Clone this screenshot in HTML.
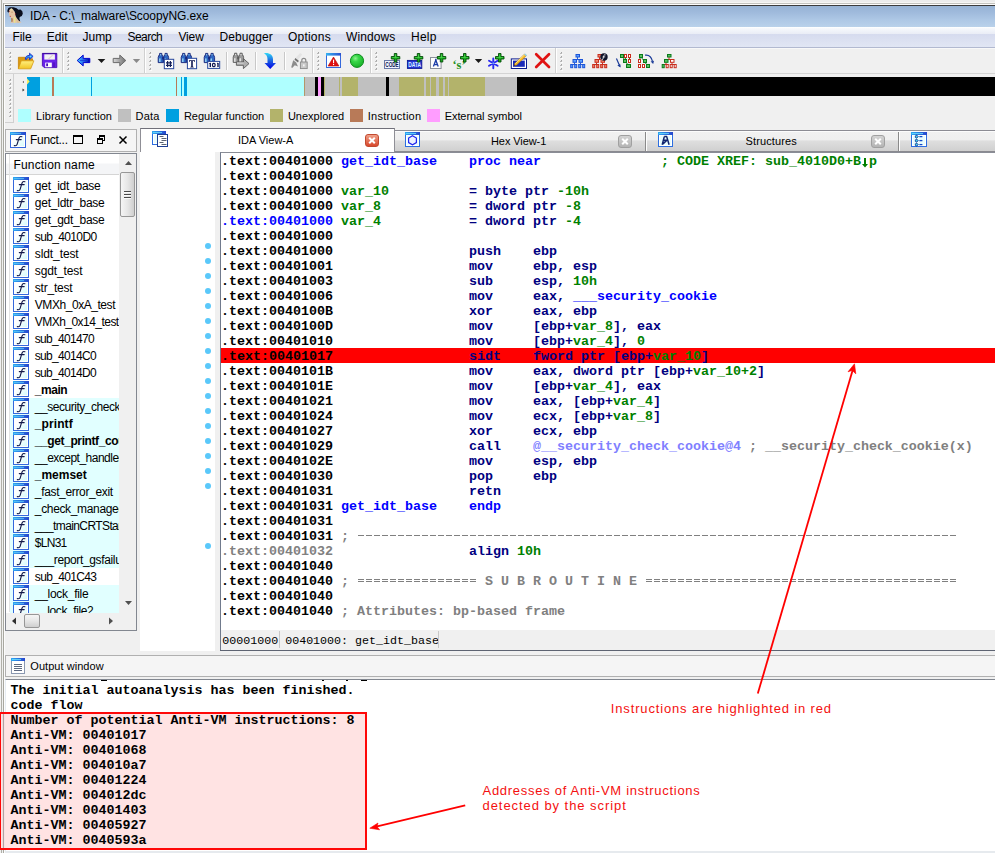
<!DOCTYPE html>
<html><head><meta charset="utf-8"><title>IDA</title><style>
*{box-sizing:border-box;margin:0;padding:0}
html,body{width:995px;height:853px;overflow:hidden;background:#f0f0f0}
body{font-family:"Liberation Sans",sans-serif;font-size:12px;color:#000;position:relative}
.a{position:absolute}
.t{position:absolute;white-space:pre;line-height:1}
.mono{font-family:"Liberation Mono",monospace;font-weight:bold;font-size:13.333px;white-space:pre;line-height:15px}
.ln{position:absolute;left:221px;height:15px;white-space:pre}
.k{color:#000}.b{color:#0000ff}.n{color:#000080}.g{color:#008000}.y{color:#808080}.p{color:#8080ff}
</style></head><body>
<div class="a" style="left:0px;top:0px;width:995px;height:5px;background:#ececec;"></div>
<div class="a" style="left:0px;top:0px;width:5px;height:853px;background:#f0f0f0;"></div>
<div class="a" style="left:1px;top:0px;width:1px;height:853px;background:#b0b0a8;"></div>
<div class="a" style="left:3px;top:2px;width:992px;height:1px;background:#f6f6f4;"></div>
<div class="a" style="left:3px;top:3px;width:992px;height:1px;background:#c4c4c0;"></div>
<div class="a" style="left:3px;top:3px;width:1px;height:850px;background:#a8a8a0;"></div>
<div class="a" style="left:4px;top:4px;width:991px;height:1px;background:#fcfcfc;"></div>
<div class="a" style="left:4px;top:4px;width:1px;height:849px;background:#fcfcfc;"></div>
<div class="a" style="left:5px;top:5px;width:990px;height:1px;background:#3c3c3c;"></div>
<div class="a" style="left:5px;top:6px;width:990px;height:21px;background:linear-gradient(to bottom,#97b3d5 0%,#9fbadc 30%,#adc7e5 65%,#b9d1ea 100%);"></div>
<div class="t" style="left:29.9px;top:9.84px;font-size:12px;letter-spacing:-0.093px;">IDA - C:\_malware\ScoopyNG.exe</div>
<svg class="a" style="left:7px;top:7px" width="16" height="16" viewBox="0 0 16 16"><path d="M1.87 3.16L4.2 1.1L5.7 2.1L7.8 4.7L8.3 7.8L9.1 10.1L10.1 11.4L11.9 13.7L13.2 14.5L14.5 15.8L2.9 15.8L4.7 14.8L4.96 11.4L3.16 10.1L2.1 8.3L1.87 5.7Z" fill="#e6c4a4"/><path d="M4.2 10.9L5.7 11.4L5.5 14.8L4.45 14.9Z" fill="#a8703c"/><path d="M7 10.1h1.3v5.7h-1.3z" fill="#e6e690"/><path d="M3.16 3.3L4.45 1.35L5.7 3.3Z" fill="#e8e8a0"/><path d="M8.4 10.4L12.4 15.8L10.4 15.8Z" fill="#d8c090"/><path d="M0.45 3.16L1.35 1.1L3.16 0.19L6.5 0.19L9.6 1.35L11.4 2.64L13.5 2.4L15.3 4.2L15.8 6.8L14.8 9.1L12.7 10.1L12.4 11.4L13.2 14.5L11.9 13.7L10.1 11.4L9.1 10.1L8.3 7.8L7.8 4.7L5.7 2.1L4.2 1.1L2.4 2.64L1.6 5.7L0.45 4.7Z" fill="#0a0e1e"/><circle cx="3.3" cy="9.3" r="0.55" fill="#b02040"/><circle cx="8.5" cy="6.9" r="0.6" fill="#902030"/><circle cx="2.3" cy="4.4" r="0.5" fill="#903040"/><path d="M4.6 4.8h0.9v0.7h-0.9z" fill="#906030"/></svg>
<div class="a" style="left:5px;top:27px;width:990px;height:20px;background:linear-gradient(to bottom,#ffffff 0%,#f6f8fc 8%,#eaedf6 34%,#d6dbee 35%,#e1e6f4 100%);"></div>
<div class="a" style="left:5px;top:47px;width:990px;height:1px;background:#b2b9d0;"></div>
<div class="a" style="left:5px;top:48px;width:990px;height:1px;background:#f8f8f8;"></div>
<div class="t" style="left:12.4px;top:30.84px;font-size:12px;letter-spacing:-0.015px;">File</div>
<div class="t" style="left:46.7px;top:30.84px;font-size:12px;letter-spacing:0.071px;">Edit</div>
<div class="t" style="left:82.5px;top:30.84px;font-size:12px;letter-spacing:-0.015px;">Jump</div>
<div class="t" style="left:127.5px;top:30.84px;font-size:12px;letter-spacing:-0.546px;">Search</div>
<div class="t" style="left:178.5px;top:30.84px;font-size:12px;letter-spacing:-0.166px;">View</div>
<div class="t" style="left:219.5px;top:30.84px;font-size:12px;letter-spacing:0.083px;">Debugger</div>
<div class="t" style="left:287.9px;top:30.84px;font-size:12px;letter-spacing:0.240px;">Options</div>
<div class="t" style="left:346.0px;top:30.84px;font-size:12px;letter-spacing:0.102px;">Windows</div>
<div class="t" style="left:411.1px;top:30.84px;font-size:12px;letter-spacing:0.204px;">Help</div>
<div class="a" style="left:5px;top:49px;width:990px;height:24px;background:#f0f0f0;"></div>
<div class="a" style="left:5px;top:73px;width:990px;height:1px;background:#d4d4d4;"></div>
<div class="a" style="left:10px;top:52px;width:1px;height:1px;background:#a4a4a4"></div><div class="a" style="left:9px;top:53px;width:2px;height:1px;background:#b8b8b8"></div><div class="a" style="left:10px;top:54px;width:2px;height:1px;background:#fbfbfb"></div>
<div class="a" style="left:10px;top:56px;width:1px;height:1px;background:#a4a4a4"></div><div class="a" style="left:9px;top:57px;width:2px;height:1px;background:#b8b8b8"></div><div class="a" style="left:10px;top:58px;width:2px;height:1px;background:#fbfbfb"></div>
<div class="a" style="left:10px;top:60px;width:1px;height:1px;background:#a4a4a4"></div><div class="a" style="left:9px;top:61px;width:2px;height:1px;background:#b8b8b8"></div><div class="a" style="left:10px;top:62px;width:2px;height:1px;background:#fbfbfb"></div>
<div class="a" style="left:10px;top:64px;width:1px;height:1px;background:#a4a4a4"></div><div class="a" style="left:9px;top:65px;width:2px;height:1px;background:#b8b8b8"></div><div class="a" style="left:10px;top:66px;width:2px;height:1px;background:#fbfbfb"></div>
<div class="a" style="left:10px;top:68px;width:1px;height:1px;background:#a4a4a4"></div><div class="a" style="left:9px;top:69px;width:2px;height:1px;background:#b8b8b8"></div><div class="a" style="left:10px;top:70px;width:2px;height:1px;background:#fbfbfb"></div>
<div class="a" style="left:68px;top:52px;width:1px;height:1px;background:#a4a4a4"></div><div class="a" style="left:67px;top:53px;width:2px;height:1px;background:#b8b8b8"></div><div class="a" style="left:68px;top:54px;width:2px;height:1px;background:#fbfbfb"></div>
<div class="a" style="left:68px;top:56px;width:1px;height:1px;background:#a4a4a4"></div><div class="a" style="left:67px;top:57px;width:2px;height:1px;background:#b8b8b8"></div><div class="a" style="left:68px;top:58px;width:2px;height:1px;background:#fbfbfb"></div>
<div class="a" style="left:68px;top:60px;width:1px;height:1px;background:#a4a4a4"></div><div class="a" style="left:67px;top:61px;width:2px;height:1px;background:#b8b8b8"></div><div class="a" style="left:68px;top:62px;width:2px;height:1px;background:#fbfbfb"></div>
<div class="a" style="left:68px;top:64px;width:1px;height:1px;background:#a4a4a4"></div><div class="a" style="left:67px;top:65px;width:2px;height:1px;background:#b8b8b8"></div><div class="a" style="left:68px;top:66px;width:2px;height:1px;background:#fbfbfb"></div>
<div class="a" style="left:68px;top:68px;width:1px;height:1px;background:#a4a4a4"></div><div class="a" style="left:67px;top:69px;width:2px;height:1px;background:#b8b8b8"></div><div class="a" style="left:68px;top:70px;width:2px;height:1px;background:#fbfbfb"></div>
<div class="a" style="left:150px;top:52px;width:1px;height:1px;background:#a4a4a4"></div><div class="a" style="left:149px;top:53px;width:2px;height:1px;background:#b8b8b8"></div><div class="a" style="left:150px;top:54px;width:2px;height:1px;background:#fbfbfb"></div>
<div class="a" style="left:150px;top:56px;width:1px;height:1px;background:#a4a4a4"></div><div class="a" style="left:149px;top:57px;width:2px;height:1px;background:#b8b8b8"></div><div class="a" style="left:150px;top:58px;width:2px;height:1px;background:#fbfbfb"></div>
<div class="a" style="left:150px;top:60px;width:1px;height:1px;background:#a4a4a4"></div><div class="a" style="left:149px;top:61px;width:2px;height:1px;background:#b8b8b8"></div><div class="a" style="left:150px;top:62px;width:2px;height:1px;background:#fbfbfb"></div>
<div class="a" style="left:150px;top:64px;width:1px;height:1px;background:#a4a4a4"></div><div class="a" style="left:149px;top:65px;width:2px;height:1px;background:#b8b8b8"></div><div class="a" style="left:150px;top:66px;width:2px;height:1px;background:#fbfbfb"></div>
<div class="a" style="left:150px;top:68px;width:1px;height:1px;background:#a4a4a4"></div><div class="a" style="left:149px;top:69px;width:2px;height:1px;background:#b8b8b8"></div><div class="a" style="left:150px;top:70px;width:2px;height:1px;background:#fbfbfb"></div>
<div class="a" style="left:318px;top:52px;width:1px;height:1px;background:#a4a4a4"></div><div class="a" style="left:317px;top:53px;width:2px;height:1px;background:#b8b8b8"></div><div class="a" style="left:318px;top:54px;width:2px;height:1px;background:#fbfbfb"></div>
<div class="a" style="left:318px;top:56px;width:1px;height:1px;background:#a4a4a4"></div><div class="a" style="left:317px;top:57px;width:2px;height:1px;background:#b8b8b8"></div><div class="a" style="left:318px;top:58px;width:2px;height:1px;background:#fbfbfb"></div>
<div class="a" style="left:318px;top:60px;width:1px;height:1px;background:#a4a4a4"></div><div class="a" style="left:317px;top:61px;width:2px;height:1px;background:#b8b8b8"></div><div class="a" style="left:318px;top:62px;width:2px;height:1px;background:#fbfbfb"></div>
<div class="a" style="left:318px;top:64px;width:1px;height:1px;background:#a4a4a4"></div><div class="a" style="left:317px;top:65px;width:2px;height:1px;background:#b8b8b8"></div><div class="a" style="left:318px;top:66px;width:2px;height:1px;background:#fbfbfb"></div>
<div class="a" style="left:318px;top:68px;width:1px;height:1px;background:#a4a4a4"></div><div class="a" style="left:317px;top:69px;width:2px;height:1px;background:#b8b8b8"></div><div class="a" style="left:318px;top:70px;width:2px;height:1px;background:#fbfbfb"></div>
<div class="a" style="left:376px;top:52px;width:1px;height:1px;background:#a4a4a4"></div><div class="a" style="left:375px;top:53px;width:2px;height:1px;background:#b8b8b8"></div><div class="a" style="left:376px;top:54px;width:2px;height:1px;background:#fbfbfb"></div>
<div class="a" style="left:376px;top:56px;width:1px;height:1px;background:#a4a4a4"></div><div class="a" style="left:375px;top:57px;width:2px;height:1px;background:#b8b8b8"></div><div class="a" style="left:376px;top:58px;width:2px;height:1px;background:#fbfbfb"></div>
<div class="a" style="left:376px;top:60px;width:1px;height:1px;background:#a4a4a4"></div><div class="a" style="left:375px;top:61px;width:2px;height:1px;background:#b8b8b8"></div><div class="a" style="left:376px;top:62px;width:2px;height:1px;background:#fbfbfb"></div>
<div class="a" style="left:376px;top:64px;width:1px;height:1px;background:#a4a4a4"></div><div class="a" style="left:375px;top:65px;width:2px;height:1px;background:#b8b8b8"></div><div class="a" style="left:376px;top:66px;width:2px;height:1px;background:#fbfbfb"></div>
<div class="a" style="left:376px;top:68px;width:1px;height:1px;background:#a4a4a4"></div><div class="a" style="left:375px;top:69px;width:2px;height:1px;background:#b8b8b8"></div><div class="a" style="left:376px;top:70px;width:2px;height:1px;background:#fbfbfb"></div>
<div class="a" style="left:561px;top:52px;width:1px;height:1px;background:#a4a4a4"></div><div class="a" style="left:560px;top:53px;width:2px;height:1px;background:#b8b8b8"></div><div class="a" style="left:561px;top:54px;width:2px;height:1px;background:#fbfbfb"></div>
<div class="a" style="left:561px;top:56px;width:1px;height:1px;background:#a4a4a4"></div><div class="a" style="left:560px;top:57px;width:2px;height:1px;background:#b8b8b8"></div><div class="a" style="left:561px;top:58px;width:2px;height:1px;background:#fbfbfb"></div>
<div class="a" style="left:561px;top:60px;width:1px;height:1px;background:#a4a4a4"></div><div class="a" style="left:560px;top:61px;width:2px;height:1px;background:#b8b8b8"></div><div class="a" style="left:561px;top:62px;width:2px;height:1px;background:#fbfbfb"></div>
<div class="a" style="left:561px;top:64px;width:1px;height:1px;background:#a4a4a4"></div><div class="a" style="left:560px;top:65px;width:2px;height:1px;background:#b8b8b8"></div><div class="a" style="left:561px;top:66px;width:2px;height:1px;background:#fbfbfb"></div>
<div class="a" style="left:561px;top:68px;width:1px;height:1px;background:#a4a4a4"></div><div class="a" style="left:560px;top:69px;width:2px;height:1px;background:#b8b8b8"></div><div class="a" style="left:561px;top:70px;width:2px;height:1px;background:#fbfbfb"></div>
<div class="a" style="left:62px;top:48px;width:1px;height:25px;background:#d0d0d0;"></div>
<div class="a" style="left:63px;top:48px;width:1px;height:25px;background:#fff;"></div>
<div class="a" style="left:144px;top:48px;width:1px;height:25px;background:#d0d0d0;"></div>
<div class="a" style="left:145px;top:48px;width:1px;height:25px;background:#fff;"></div>
<div class="a" style="left:312px;top:48px;width:1px;height:25px;background:#d0d0d0;"></div>
<div class="a" style="left:313px;top:48px;width:1px;height:25px;background:#fff;"></div>
<div class="a" style="left:370px;top:48px;width:1px;height:25px;background:#d0d0d0;"></div>
<div class="a" style="left:371px;top:48px;width:1px;height:25px;background:#fff;"></div>
<div class="a" style="left:555px;top:48px;width:1px;height:25px;background:#d0d0d0;"></div>
<div class="a" style="left:556px;top:48px;width:1px;height:25px;background:#fff;"></div>
<div class="a" style="left:226px;top:52px;width:1px;height:18px;background:#c8c8c8;"></div>
<div class="a" style="left:227px;top:52px;width:1px;height:18px;background:#fff;"></div>
<div class="a" style="left:255px;top:52px;width:1px;height:18px;background:#c8c8c8;"></div>
<div class="a" style="left:256px;top:52px;width:1px;height:18px;background:#fff;"></div>
<div class="a" style="left:284px;top:52px;width:1px;height:18px;background:#c8c8c8;"></div>
<div class="a" style="left:285px;top:52px;width:1px;height:18px;background:#fff;"></div>
<svg class="a" style="left:0;top:48px" width="995" height="26" viewBox="0 48 995 26"><defs><linearGradient id="gfold" x1="0" y1="0" x2="0" y2="1"><stop offset="0" stop-color="#fff080"/><stop offset="1" stop-color="#f2c424"/></linearGradient><linearGradient id="gback" x1="0" y1="0" x2="1" y2="0"><stop offset="0" stop-color="#40d0ff"/><stop offset="0.45" stop-color="#2a70f0"/><stop offset="1" stop-color="#0000a0"/></linearGradient><linearGradient id="gfwd" x1="0" y1="0" x2="1" y2="0"><stop offset="0" stop-color="#d8d8d8"/><stop offset="1" stop-color="#707070"/></linearGradient><linearGradient id="gdown" x1="0" y1="0" x2="0" y2="1"><stop offset="0" stop-color="#30d8f8"/><stop offset="0.5" stop-color="#1c60e0"/><stop offset="1" stop-color="#0000e8"/></linearGradient><radialGradient id="gball" cx="0.38" cy="0.32" r="0.7"><stop offset="0" stop-color="#90f090"/><stop offset="0.35" stop-color="#38d848"/><stop offset="1" stop-color="#18b028"/></radialGradient><linearGradient id="gwin" x1="0" y1="0" x2="1" y2="0"><stop offset="0" stop-color="#35b4f2"/><stop offset="1" stop-color="#2a4fd0"/></linearGradient></defs><path d="M18.4 57.3h6.8l1 1.5h6.3v2.2h-11l-3.1 7.6z" fill="#dc9a10" stroke="#c88408" stroke-width="0.8" stroke-linejoin="round"/><path d="M21.3 60.8h12.6l-3.2 8h-12.3z" fill="url(#gfold)" stroke="#d89a10" stroke-width="0.8" stroke-linejoin="round"/><path d="M25.3 59.3c0-3 1.8-3.9 4.2-3.9v-2.2l3.6 3.2-3.6 3.2v-2.1c-1.6 0-2.6 0.4-2.9 1.8z" fill="#3090f0" stroke="#1428c8" stroke-width="0.9" stroke-linejoin="round"/><path d="M29.8 55.9l1.9 0.6-1.9 0.8z" fill="#7ff0ff"/><path d="M42.4 53.4h14.4v14.2h-12.6l-1.8-1.8z" fill="#6a22ea" stroke="#4a0cb4" stroke-width="0.9" stroke-linejoin="round"/><rect x="42.4" y="53.2" width="14.4" height="1" fill="#3a0a98"/><rect x="44.3" y="54.3" width="10.6" height="5.3" fill="#f2f2f2"/><path d="M47.5 59.2l5-4.6h1.6l-5 4.6z" fill="#e0d0d0"/><rect x="45.2" y="62.6" width="6.6" height="4.6" fill="#fdfdff"/><rect x="46.2" y="63.4" width="1.8" height="2.8" fill="#4a10b8"/><rect x="52.6" y="62.4" width="2.6" height="4.6" fill="#5514c8"/><path d="M77.2 60.5l6-5.4v3.3h6.6v4.2h-6.6v3.3z" fill="url(#gback)" stroke="#0000d0" stroke-width="1" stroke-linejoin="round"/><path d="M80 60.5h8" stroke="#1030d8" stroke-width="1" opacity="0.7"/><path d="M97.7 58.9h7.6l-3.8 4.1z" fill="#1a1a1a"/><path d="M125.8 60.5l-6-5.4v3.3h-6.6v4.2h6.6v3.3z" fill="url(#gfwd)" stroke="#6a6a6a" stroke-width="1" stroke-linejoin="round"/><path d="M132.8 58.9h7.4l-3.7 4.1z" fill="#8a8a8a"/><path d="M159.6 53.4h2.2v2h0.8l0.6 2v5.2h-5v-5.2l0.6-2h0.8z" fill="#2f68c4" stroke="#16267a" stroke-width="0.9" stroke-linejoin="round"/><rect x="159" y="58.4" width="1.6" height="3.6" fill="#8fcdf0"/><rect x="160" y="54.199999999999996" width="1.2" height="1.2" fill="#8fcdf0"/><path d="M165.0 53.4h2.2v2h0.8l0.6 2v5.2h-5v-5.2l0.6-2h0.8z" fill="#2f68c4" stroke="#16267a" stroke-width="0.9" stroke-linejoin="round"/><rect x="164.4" y="58.4" width="1.6" height="3.6" fill="#8fcdf0"/><rect x="165.4" y="54.199999999999996" width="1.2" height="1.2" fill="#8fcdf0"/><rect x="162.2" y="56.9" width="2" height="2.5" fill="#16267a"/><rect x="164.3" y="59.3" width="9.4" height="9.4" fill="#fff" stroke="#27479c" stroke-width="1"/><path d="M167.6 61v6M170.4 61v6M166 62.9h6M166 65.3h6" stroke="#14205a" stroke-width="1.2" fill="none"/><path d="M182.6 53.4h2.2v2h0.8l0.6 2v5.2h-5v-5.2l0.6-2h0.8z" fill="#2f68c4" stroke="#16267a" stroke-width="0.9" stroke-linejoin="round"/><rect x="182" y="58.4" width="1.6" height="3.6" fill="#8fcdf0"/><rect x="183" y="54.199999999999996" width="1.2" height="1.2" fill="#8fcdf0"/><path d="M188.0 53.4h2.2v2h0.8l0.6 2v5.2h-5v-5.2l0.6-2h0.8z" fill="#2f68c4" stroke="#16267a" stroke-width="0.9" stroke-linejoin="round"/><rect x="187.4" y="58.4" width="1.6" height="3.6" fill="#8fcdf0"/><rect x="188.4" y="54.199999999999996" width="1.2" height="1.2" fill="#8fcdf0"/><rect x="185.2" y="56.9" width="2" height="2.5" fill="#16267a"/><rect x="187.4" y="58.3" width="9.2" height="10.4" fill="#fff" stroke="#27479c" stroke-width="1"/><path d="M189 60.2h6v1.6h-0.7l-0.4-0.7h-1.1v5.4l0.9 0.4v0.6h-3.4v-0.6l0.9-0.4v-5.4h-1.1l-0.4 0.7h-0.7z" fill="#101850"/><path d="M205.6 53.4h2.2v2h0.8l0.6 2v5.2h-5v-5.2l0.6-2h0.8z" fill="#2f68c4" stroke="#16267a" stroke-width="0.9" stroke-linejoin="round"/><rect x="205" y="58.4" width="1.6" height="3.6" fill="#8fcdf0"/><rect x="206" y="54.199999999999996" width="1.2" height="1.2" fill="#8fcdf0"/><path d="M211.0 53.4h2.2v2h0.8l0.6 2v5.2h-5v-5.2l0.6-2h0.8z" fill="#2f68c4" stroke="#16267a" stroke-width="0.9" stroke-linejoin="round"/><rect x="210.4" y="58.4" width="1.6" height="3.6" fill="#8fcdf0"/><rect x="211.4" y="54.199999999999996" width="1.2" height="1.2" fill="#8fcdf0"/><rect x="208.2" y="56.9" width="2" height="2.5" fill="#16267a"/><rect x="207.7" y="61.4" width="12" height="7" fill="#fff" stroke="#27479c" stroke-width="1"/><path d="M210.3 63v4M218 63v4" stroke="#101850" stroke-width="1.4"/><path d="M209.3 63.6l1-0.6M217 63.6l1-0.6" stroke="#101850" stroke-width="0.9"/><rect x="212.5" y="63.4" width="2.6" height="3.2" rx="1" fill="none" stroke="#101850" stroke-width="1.2"/><path d="M234.6 53.2h2.2v2h0.8l0.6 2v5.2h-5v-5.2l0.6-2h0.8z" fill="#9c9c9c" stroke="#5c5c5c" stroke-width="0.9" stroke-linejoin="round"/><rect x="234" y="58.2" width="1.6" height="3.6" fill="#e0e0e0"/><rect x="235" y="54.0" width="1.2" height="1.2" fill="#e0e0e0"/><path d="M240.0 53.2h2.2v2h0.8l0.6 2v5.2h-5v-5.2l0.6-2h0.8z" fill="#9c9c9c" stroke="#5c5c5c" stroke-width="0.9" stroke-linejoin="round"/><rect x="239.4" y="58.2" width="1.6" height="3.6" fill="#e0e0e0"/><rect x="240.4" y="54.0" width="1.2" height="1.2" fill="#e0e0e0"/><rect x="237.2" y="56.7" width="2" height="2.5" fill="#5c5c5c"/><path d="M236.4 62h7v-3.4l5.6 5-5.6 5v-3.3h-7z" fill="#b0b0b0" stroke="#5a5a5a" stroke-width="0.9" stroke-linejoin="round"/><path d="M237 63h6.5" stroke="#e8e8e8" stroke-width="0.9"/><path d="M264 53.2c5-0.8 9 1.4 9 6v3.8h3l-5.8 5.9-5.7-5.9h3v-3.8c0-2.5-1-4.6-3.5-6z" fill="url(#gdown)"/><path d="M300.2 53l2 1.6-6 8-3-2.4z" fill="#e4e4e4"/><path d="M293.2 60.2l3 2.4 1.8 4-3.2-1.4-2.6 2.9-1-0.8z" fill="#8c8c8c"/><path d="M295.2 58l3.6 2.8-0.8 1.8-3.4-2.8z" fill="#707070"/><rect x="300.4" y="62" width="6.8" height="6.6" fill="#c8c8c8" stroke="#8a8a8a" stroke-width="0.9"/><path d="M301.8 62v-1.6a2 2 0 0 1 4 0v1.6" fill="none" stroke="#8a8a8a" stroke-width="1.2"/><rect x="303.2" y="64.4" width="1.3" height="2" fill="#fff"/><rect x="326.5" y="53.5" width="14" height="14" fill="#fff" stroke="#3468dc" stroke-width="1"/><rect x="326" y="53" width="15" height="2.6" fill="url(#gwin)"/><path d="M333.5 57l5.4 9h-10.8z" fill="#e01010" stroke="#b00808" stroke-width="0.6" stroke-linejoin="round"/><rect x="333" y="59.6" width="1.1" height="3.6" fill="#fff"/><rect x="333" y="64" width="1.1" height="1.1" fill="#fff"/><circle cx="357" cy="60.8" r="6.6" fill="url(#gball)" stroke="#0c8c1c" stroke-width="1"/><rect x="384.5" y="60.5" width="15" height="8" fill="#eef3ff" stroke="#6a7aa8" stroke-width="1"/><text x="385.3" y="67.4" font-family="Liberation Sans" font-weight="bold" font-size="6.6" fill="#0a1450" textLength="13.4" lengthAdjust="spacingAndGlyphs">CODE</text><path d="M394.3 53.5h2.5v3h3v2.5h-3v3h-2.5v-3h-3v-2.5h3z" fill="#16a81c" stroke="#064c0a" stroke-width="0.9" stroke-linejoin="round"/><path d="M395 54.400000000000006h1v2.8h-1zM392.2 57.2h6.6v0.9h-6.6z" fill="#58e05a" opacity="0.75"/><rect x="407.4" y="60.4" width="14.4" height="8" fill="#2434d8" stroke="#0a1890" stroke-width="0.9"/><text x="408.2" y="67.2" font-family="Liberation Sans" font-weight="bold" font-size="6.6" fill="#d8f4ff" textLength="13" lengthAdjust="spacingAndGlyphs">DATA</text><path d="M417.3 53.5h2.5v3h3v2.5h-3v3h-2.5v-3h-3v-2.5h3z" fill="#16a81c" stroke="#064c0a" stroke-width="0.9" stroke-linejoin="round"/><path d="M418 54.400000000000006h1v2.8h-1zM415.2 57.2h6.6v0.9h-6.6z" fill="#58e05a" opacity="0.75"/><rect x="430.5" y="57.5" width="10.6" height="11" fill="#fdfdfd" stroke="#8a909c" stroke-width="1"/><path d="M433.4 66.6l2.4-6.4 2.4 6.4M434.2 64.6h3.4" stroke="#1c3ca8" stroke-width="1.3" fill="none"/><circle cx="435.8" cy="59.8" r="0.9" fill="#1c3ca8"/><path d="M440.3 53.5h2.5v3h3v2.5h-3v3h-2.5v-3h-3v-2.5h3z" fill="#16a81c" stroke="#064c0a" stroke-width="0.9" stroke-linejoin="round"/><path d="M441 54.400000000000006h1v2.8h-1zM438.2 57.2h6.6v0.9h-6.6z" fill="#58e05a" opacity="0.75"/><text x="452.4" y="68.6" font-family="Liberation Serif" font-weight="bold" font-size="12.5" fill="#239023">‘s’</text><path d="M463.5 53.5h2.5v3h3v2.5h-3v3h-2.5v-3h-3v-2.5h3z" fill="#16a81c" stroke="#064c0a" stroke-width="0.9" stroke-linejoin="round"/><path d="M464.2 54.400000000000006h1v2.8h-1zM461.4 57.2h6.6v0.9h-6.6z" fill="#58e05a" opacity="0.75"/><path d="M474.8 58.9h7.4l-3.7 4.1z" fill="#1a1a1a"/><g stroke="#2828f0" stroke-width="1.9" stroke-linecap="round"><path d="M493.3 58.4v9.8M489 60.8l8.6 5M489 65.8l8.6-5"/></g><circle cx="493.3" cy="63.3" r="1" fill="#70a0ff"/><path d="M498.5 53.5h2.5v3h3v2.5h-3v3h-2.5v-3h-3v-2.5h3z" fill="#16a81c" stroke="#064c0a" stroke-width="0.9" stroke-linejoin="round"/><path d="M499.2 54.400000000000006h1v2.8h-1zM496.4 57.2h6.6v0.9h-6.6z" fill="#58e05a" opacity="0.75"/><rect x="511.3" y="58.9" width="15.2" height="9.6" fill="#fff" stroke="#0c1c90" stroke-width="1"/><rect x="513" y="60.6" width="11.8" height="6.2" fill="#1a2ab8"/><path d="M514 65.8l1-2.6 9.6-9.2 1.8 1.8-9.8 9.2z" fill="#f8b820" stroke="#b07810" stroke-width="0.5"/><path d="M515.4 63.6l9.4-9" stroke="#fff0a0" stroke-width="0.8"/><path d="M524.2 54.4l1-1 1.8 1.8-1 1z" fill="#90d0f0"/><path d="M514 65.8l0.5-1.4 1 1z" fill="#202020"/><path d="M536.2 54.2l12.8 12.8M549 54.2l-12.8 12.8" stroke="#e01212" stroke-width="2.7" stroke-linecap="round" fill="none"/><path d="M577.5 57v2M574.5 59.5h6.5M574.5 62.5v2M580.5 62.5v2M572 64.5h5M578.5 64.5h5" stroke="#2a60d8" stroke-width="1" fill="none"/><rect x="576.0" y="54.5" width="3.5" height="2.5" fill="#5ea2ff" stroke="#1c54d8" stroke-width="1"/><rect x="573.0" y="59.5" width="3.5" height="2.8" fill="#5ea2ff" stroke="#1c54d8" stroke-width="1"/><rect x="579.0" y="59.5" width="3.5" height="2.8" fill="#5ea2ff" stroke="#1c54d8" stroke-width="1"/><rect x="570.7" y="64.5" width="2" height="3.2" fill="#5ea2ff" stroke="#1c54d8" stroke-width="1"/><rect x="574.7" y="64.5" width="2" height="3.2" fill="#5ea2ff" stroke="#1c54d8" stroke-width="1"/><rect x="578.7" y="64.5" width="2" height="3.2" fill="#5ea2ff" stroke="#1c54d8" stroke-width="1"/><rect x="582.7" y="64.5" width="2" height="3.2" fill="#5ea2ff" stroke="#1c54d8" stroke-width="1"/><path d="M599.5 57v2M596.5 59.5h6.5M596.5 62.5v2M602.5 62.5v2M594 64.5h5M600.5 64.5h5" stroke="#c83020" stroke-width="1" fill="none"/><rect x="598.0" y="54.5" width="3.5" height="2.5" fill="#f08a70" stroke="#c82c1c" stroke-width="1"/><rect x="595.0" y="59.5" width="3.5" height="2.8" fill="#f08a70" stroke="#c82c1c" stroke-width="1"/><rect x="601.0" y="59.5" width="3.5" height="2.8" fill="#f08a70" stroke="#c82c1c" stroke-width="1"/><rect x="592.7" y="64.5" width="2" height="3.2" fill="#f08a70" stroke="#c82c1c" stroke-width="1"/><rect x="596.7" y="64.5" width="2" height="3.2" fill="#f08a70" stroke="#c82c1c" stroke-width="1"/><rect x="600.7" y="64.5" width="2" height="3.2" fill="#f08a70" stroke="#c82c1c" stroke-width="1"/><rect x="604.7" y="64.5" width="2" height="3.2" fill="#f08a70" stroke="#c82c1c" stroke-width="1"/><circle cx="604" cy="57" r="3.7" fill="#10142a"/><path d="M605.6 54.9c-1-0.4-1.6 0-1.8 0.9l-0.9 3.2c-0.2 0.7-0.7 0.9-1.4 0.7M602.6 56.9h2.6" stroke="#fff" stroke-width="0.8" fill="none"/><path d="M616.4 58.4l3.6 8" stroke="#1c3c98" stroke-width="1.2"/><path d="M620.6 67.6l-3.3-2 2.9-1.6z" fill="#1c3c98"/><path d="M622 56l3.5 5 3 5M625.5 56v4M629.5 56v6" stroke="#0a7a1a" stroke-width="0.9" fill="none"/><rect x="620.5" y="54.5" width="3" height="3" fill="#58c060" stroke="#0a7a1a" stroke-width="1"/><rect x="624.5" y="54.5" width="2" height="3" fill="#fff" stroke="#c82c1c" stroke-width="1"/><rect x="628.5" y="54.5" width="2" height="3" fill="#fff" stroke="#c82c1c" stroke-width="1"/><rect x="623.5" y="59.5" width="3" height="3" fill="#58c060" stroke="#0a7a1a" stroke-width="1"/><rect x="628.5" y="59.5" width="2" height="3" fill="#fff" stroke="#c82c1c" stroke-width="1"/><rect x="626.5" y="64.5" width="4" height="3" fill="#58c060" stroke="#0a7a1a" stroke-width="1"/><path d="M641 57l3.5 4.5 3 4.5M640 58v4" stroke="#0a7a1a" stroke-width="0.9" fill="none"/><rect x="639.5" y="54.5" width="3" height="3" fill="#58c060" stroke="#0a7a1a" stroke-width="1"/><rect x="638.5" y="59.5" width="2" height="3" fill="#fff" stroke="#c82c1c" stroke-width="1"/><rect x="643.5" y="59.5" width="3" height="3" fill="#58c060" stroke="#0a7a1a" stroke-width="1"/><rect x="638.5" y="64.5" width="2" height="3" fill="#fff" stroke="#c82c1c" stroke-width="1"/><rect x="642.5" y="64.5" width="2" height="3" fill="#fff" stroke="#c82c1c" stroke-width="1"/><rect x="646.5" y="64.5" width="3" height="3" fill="#58c060" stroke="#0a7a1a" stroke-width="1"/><path d="M645 55.2c3.5-0.6 6.4 1.6 7.4 6" stroke="#1c3c98" stroke-width="1.2" fill="none"/><path d="M653.2 64l-2.6-2.6 3.4-0.6z" fill="#1c3c98"/><path d="M669.0 57v2M666.0 59.5h6.5M666.0 62.5v2M672.0 62.5v2M663.5 64.5h5M670.0 64.5h5" stroke="#c83020" stroke-width="1" fill="none"/><rect x="667.5" y="54.5" width="3.5" height="2.5" fill="#58c060" stroke="#0a7a1a" stroke-width="1"/><rect x="664.5" y="59.5" width="3.5" height="2.8" fill="#58c060" stroke="#0a7a1a" stroke-width="1"/><rect x="670.5" y="59.5" width="3.5" height="2.8" fill="#fff" stroke="#c82c1c" stroke-width="1"/><rect x="662.2" y="64.5" width="2" height="3.2" fill="#58c060" stroke="#0a7a1a" stroke-width="1"/><rect x="666.2" y="64.5" width="2" height="3.2" fill="#fff" stroke="#c82c1c" stroke-width="1"/><rect x="670.2" y="64.5" width="2" height="3.2" fill="#fff" stroke="#c82c1c" stroke-width="1"/><rect x="674.2" y="64.5" width="2" height="3.2" fill="#fff" stroke="#c82c1c" stroke-width="1"/></svg>
<div class="a" style="left:5px;top:74px;width:9px;height:49px;background:#f0f0f0;border-right:1px solid #d0d0d0;border-bottom:1px solid #d0d0d0"></div>
<div class="a" style="left:10px;top:79px;width:1px;height:1px;background:#a4a4a4"></div><div class="a" style="left:9px;top:80px;width:2px;height:1px;background:#b8b8b8"></div><div class="a" style="left:10px;top:81px;width:2px;height:1px;background:#fbfbfb"></div>
<div class="a" style="left:10px;top:83px;width:1px;height:1px;background:#a4a4a4"></div><div class="a" style="left:9px;top:84px;width:2px;height:1px;background:#b8b8b8"></div><div class="a" style="left:10px;top:85px;width:2px;height:1px;background:#fbfbfb"></div>
<div class="a" style="left:10px;top:87px;width:1px;height:1px;background:#a4a4a4"></div><div class="a" style="left:9px;top:88px;width:2px;height:1px;background:#b8b8b8"></div><div class="a" style="left:10px;top:89px;width:2px;height:1px;background:#fbfbfb"></div>
<div class="a" style="left:10px;top:91px;width:1px;height:1px;background:#a4a4a4"></div><div class="a" style="left:9px;top:92px;width:2px;height:1px;background:#b8b8b8"></div><div class="a" style="left:10px;top:93px;width:2px;height:1px;background:#fbfbfb"></div>
<div class="a" style="left:10px;top:95px;width:1px;height:1px;background:#a4a4a4"></div><div class="a" style="left:9px;top:96px;width:2px;height:1px;background:#b8b8b8"></div><div class="a" style="left:10px;top:97px;width:2px;height:1px;background:#fbfbfb"></div>
<div class="a" style="left:10px;top:99px;width:1px;height:1px;background:#a4a4a4"></div><div class="a" style="left:9px;top:100px;width:2px;height:1px;background:#b8b8b8"></div><div class="a" style="left:10px;top:101px;width:2px;height:1px;background:#fbfbfb"></div>
<div class="a" style="left:10px;top:103px;width:1px;height:1px;background:#a4a4a4"></div><div class="a" style="left:9px;top:104px;width:2px;height:1px;background:#b8b8b8"></div><div class="a" style="left:10px;top:105px;width:2px;height:1px;background:#fbfbfb"></div>
<div class="a" style="left:10px;top:107px;width:1px;height:1px;background:#a4a4a4"></div><div class="a" style="left:9px;top:108px;width:2px;height:1px;background:#b8b8b8"></div><div class="a" style="left:10px;top:109px;width:2px;height:1px;background:#fbfbfb"></div>
<div class="a" style="left:10px;top:111px;width:1px;height:1px;background:#a4a4a4"></div><div class="a" style="left:9px;top:112px;width:2px;height:1px;background:#b8b8b8"></div><div class="a" style="left:10px;top:113px;width:2px;height:1px;background:#fbfbfb"></div>
<div class="a" style="left:10px;top:115px;width:1px;height:1px;background:#a4a4a4"></div><div class="a" style="left:9px;top:116px;width:2px;height:1px;background:#b8b8b8"></div><div class="a" style="left:10px;top:117px;width:2px;height:1px;background:#fbfbfb"></div>
<div class="a" style="left:27px;top:77px;width:968px;height:19px;background:#000;"></div>
<div class="a" style="left:27px;top:77px;width:13px;height:19px;background:#00a0e0;"></div>
<div class="a" style="left:40px;top:77px;width:265px;height:19px;background:#afffff;"></div>
<div class="a" style="left:52px;top:77px;width:2px;height:19px;background:#b87a58;"></div>
<div class="a" style="left:91px;top:77px;width:1px;height:19px;background:#00a0e0;"></div>
<div class="a" style="left:176px;top:77px;width:1px;height:19px;background:#b87a58;"></div>
<div class="a" style="left:181px;top:77px;width:1px;height:19px;background:#00a0e0;"></div>
<div class="a" style="left:184px;top:77px;width:3px;height:19px;background:#00a0e0;"></div>
<div class="a" style="left:304px;top:77px;width:1px;height:19px;background:#b3966b;"></div>
<div class="a" style="left:305px;top:77px;width:212px;height:19px;background:#c0c0c0;"></div>
<div class="a" style="left:315px;top:77px;width:3px;height:19px;background:#000;"></div>
<div class="a" style="left:318px;top:77px;width:3px;height:19px;background:#ff9dff;"></div>
<div class="a" style="left:321px;top:77px;width:3px;height:19px;background:#000;"></div>
<div class="a" style="left:324px;top:77px;width:1px;height:19px;background:#b3b36b;"></div>
<div class="a" style="left:339px;top:77px;width:1px;height:19px;background:#b3b36b;"></div>
<div class="a" style="left:342px;top:77px;width:16px;height:19px;background:#b3b36b;"></div>
<div class="a" style="left:386px;top:77px;width:3px;height:19px;background:#000;"></div>
<div class="a" style="left:399px;top:77px;width:86px;height:19px;background:#b3b36b;"></div>
<div class="a" style="left:424px;top:77px;width:2px;height:19px;background:#c0c0c0;"></div>
<div class="a" style="left:430px;top:77px;width:1px;height:19px;background:#c0c0c0;"></div>
<div class="a" style="left:436px;top:77px;width:3px;height:19px;background:#c0c0c0;"></div>
<div class="a" style="left:443px;top:77px;width:2px;height:19px;background:#c0c0c0;"></div>
<div class="a" style="left:448px;top:77px;width:1px;height:19px;background:#c0c0c0;"></div>
<svg class="a" style="left:21px;top:78px" width="10" height="16"><path d="M6 0.5L8.6 3.5L6 6.5Z" fill="#ffef5a"/><path d="M1.5 4L3 3L3 5Z" fill="#444"/><path d="M1.5 10.5L3.5 12L1.5 13.5Z" fill="#333"/></svg>
<div class="a" style="left:18px;top:109px;width:13px;height:13px;background:#afffff;"></div>
<div class="t" style="left:36.1px;top:111.19px;font-size:11px;letter-spacing:0.045px;">Library function</div>
<div class="a" style="left:118px;top:109px;width:13px;height:13px;background:#c0c0c0;"></div>
<div class="t" style="left:135.5px;top:111.19px;font-size:11px;letter-spacing:0.217px;">Data</div>
<div class="a" style="left:166px;top:109px;width:13px;height:13px;background:#00a0e0;"></div>
<div class="t" style="left:183.9px;top:111.19px;font-size:11px;letter-spacing:0.013px;">Regular function</div>
<div class="a" style="left:270px;top:109px;width:13px;height:13px;background:#b3b36b;"></div>
<div class="t" style="left:287.9px;top:111.19px;font-size:11px;letter-spacing:0.004px;">Unexplored</div>
<div class="a" style="left:350px;top:109px;width:13px;height:13px;background:#b87a58;"></div>
<div class="t" style="left:367.8px;top:111.19px;font-size:11px;letter-spacing:0.255px;">Instruction</div>
<div class="a" style="left:427px;top:109px;width:13px;height:13px;background:#ff9dff;"></div>
<div class="t" style="left:444.7px;top:111.19px;font-size:11px;letter-spacing:-0.069px;">External symbol</div>
<div class="a" style="left:5px;top:129px;width:132px;height:23px;background:#f5f5f5;border:1px solid #b0b0b0"></div>
<svg width="0" height="0" style="position:absolute"><defs><linearGradient id="tb" x1="0" y1="0" x2="1" y2="0"><stop offset="0" stop-color="#2eaaf2"/><stop offset="1" stop-color="#2644cc"/></linearGradient><linearGradient id="fb" x1="0" y1="0" x2="1" y2="1"><stop offset="0.3" stop-color="#ffffff"/><stop offset="1" stop-color="#d6fbfb"/></linearGradient></defs></svg>
<svg class="a" style="left:10px;top:132px" width="16" height="16" viewBox="0 0 16 16"><rect x="0.5" y="0.5" width="15" height="15" fill="#fff" stroke="#3468dc"/><rect x="2" y="4" width="12" height="10" fill="url(#fb)"/><rect x="0" y="0" width="16" height="3" fill="url(#tb)"/><rect x="1" y="1" width="10" height="1" fill="#6fd8fa" opacity="0.6"/><path d="M11.9 4.7C10.4 4.1 9.4 4.7 9 6.1L7.1 12.4C6.7 13.7 5.7 14 4.3 13.6M6.3 7.6L11.2 7.6" fill="none" stroke="#141a4a" stroke-width="1.15" stroke-linecap="round"/></svg>
<div class="t" style="left:30.0px;top:134.34px;font-size:12px;letter-spacing:-0.288px;">Funct...</div>
<div class="a" style="left:73px;top:135px;width:10px;height:9px;border:1px solid #000;border-top:2px solid #000"></div>
<div class="a" style="left:99px;top:135px;width:6px;height:6px;border:1px solid #000;border-top:2px solid #000"></div>
<div class="a" style="left:97px;top:138px;width:6px;height:6px;border:1px solid #000;border-top:2px solid #000;background:#f5f5f5"></div>
<svg class="a" style="left:118px;top:135px" width="10" height="10"><path d="M1.5 1.5L8.5 8.5M8.5 1.5L1.5 8.5" stroke="#000" stroke-width="1.5" fill="none"/></svg>
<div class="a" style="left:5px;top:153px;width:132px;height:478px;background:#fff;border:1px solid #828790"></div>
<div class="a" style="left:6px;top:154px;width:113px;height:21px;background:linear-gradient(to bottom,#fff 0%,#fff 45%,#f4f5f7 50%,#f4f5f7 100%);border-bottom:1px solid #d5d5d5"></div>
<div class="a" style="left:9px;top:154px;width:1px;height:458px;background:#e3e3e3;"></div>
<div class="t" style="left:13.5px;top:159.34px;font-size:12px;letter-spacing:0.159px;">Function name</div>
<div class="a" style="left:6px;top:176px;width:113px;height:437px;overflow:hidden">
<svg class="a" style="left:7px;top:1px" width="16" height="16" viewBox="0 0 16 16"><rect x="0.5" y="0.5" width="15" height="15" fill="#fff" stroke="#3468dc"/><rect x="2" y="4" width="12" height="10" fill="url(#fb)"/><rect x="0" y="0" width="16" height="3" fill="url(#tb)"/><rect x="1" y="1" width="10" height="1" fill="#6fd8fa" opacity="0.6"/><path d="M11.9 4.7C10.4 4.1 9.4 4.7 9 6.1L7.1 12.4C6.7 13.7 5.7 14 4.3 13.6M6.3 7.6L11.2 7.6" fill="none" stroke="#141a4a" stroke-width="1.15" stroke-linecap="round"/></svg>
<div class="t" style="left:28.8px;top:3.84px;font-size:12px;letter-spacing:-0.249px;">get_idt_base</div>
<svg class="a" style="left:7px;top:18px" width="16" height="16" viewBox="0 0 16 16"><rect x="0.5" y="0.5" width="15" height="15" fill="#fff" stroke="#3468dc"/><rect x="2" y="4" width="12" height="10" fill="url(#fb)"/><rect x="0" y="0" width="16" height="3" fill="url(#tb)"/><rect x="1" y="1" width="10" height="1" fill="#6fd8fa" opacity="0.6"/><path d="M11.9 4.7C10.4 4.1 9.4 4.7 9 6.1L7.1 12.4C6.7 13.7 5.7 14 4.3 13.6M6.3 7.6L11.2 7.6" fill="none" stroke="#141a4a" stroke-width="1.15" stroke-linecap="round"/></svg>
<div class="t" style="left:28.8px;top:20.84px;font-size:12px;letter-spacing:-0.228px;">get_ldtr_base</div>
<svg class="a" style="left:7px;top:35px" width="16" height="16" viewBox="0 0 16 16"><rect x="0.5" y="0.5" width="15" height="15" fill="#fff" stroke="#3468dc"/><rect x="2" y="4" width="12" height="10" fill="url(#fb)"/><rect x="0" y="0" width="16" height="3" fill="url(#tb)"/><rect x="1" y="1" width="10" height="1" fill="#6fd8fa" opacity="0.6"/><path d="M11.9 4.7C10.4 4.1 9.4 4.7 9 6.1L7.1 12.4C6.7 13.7 5.7 14 4.3 13.6M6.3 7.6L11.2 7.6" fill="none" stroke="#141a4a" stroke-width="1.15" stroke-linecap="round"/></svg>
<div class="t" style="left:28.8px;top:37.84px;font-size:12px;letter-spacing:-0.249px;">get_gdt_base</div>
<svg class="a" style="left:7px;top:52px" width="16" height="16" viewBox="0 0 16 16"><rect x="0.5" y="0.5" width="15" height="15" fill="#fff" stroke="#3468dc"/><rect x="2" y="4" width="12" height="10" fill="url(#fb)"/><rect x="0" y="0" width="16" height="3" fill="url(#tb)"/><rect x="1" y="1" width="10" height="1" fill="#6fd8fa" opacity="0.6"/><path d="M11.9 4.7C10.4 4.1 9.4 4.7 9 6.1L7.1 12.4C6.7 13.7 5.7 14 4.3 13.6M6.3 7.6L11.2 7.6" fill="none" stroke="#141a4a" stroke-width="1.15" stroke-linecap="round"/></svg>
<div class="t" style="left:28.8px;top:54.84px;font-size:12px;letter-spacing:-0.640px;">sub_4010D0</div>
<svg class="a" style="left:7px;top:69px" width="16" height="16" viewBox="0 0 16 16"><rect x="0.5" y="0.5" width="15" height="15" fill="#fff" stroke="#3468dc"/><rect x="2" y="4" width="12" height="10" fill="url(#fb)"/><rect x="0" y="0" width="16" height="3" fill="url(#tb)"/><rect x="1" y="1" width="10" height="1" fill="#6fd8fa" opacity="0.6"/><path d="M11.9 4.7C10.4 4.1 9.4 4.7 9 6.1L7.1 12.4C6.7 13.7 5.7 14 4.3 13.6M6.3 7.6L11.2 7.6" fill="none" stroke="#141a4a" stroke-width="1.15" stroke-linecap="round"/></svg>
<div class="t" style="left:28.8px;top:71.84px;font-size:12px;letter-spacing:-0.100px;">sldt_test</div>
<svg class="a" style="left:7px;top:86px" width="16" height="16" viewBox="0 0 16 16"><rect x="0.5" y="0.5" width="15" height="15" fill="#fff" stroke="#3468dc"/><rect x="2" y="4" width="12" height="10" fill="url(#fb)"/><rect x="0" y="0" width="16" height="3" fill="url(#tb)"/><rect x="1" y="1" width="10" height="1" fill="#6fd8fa" opacity="0.6"/><path d="M11.9 4.7C10.4 4.1 9.4 4.7 9 6.1L7.1 12.4C6.7 13.7 5.7 14 4.3 13.6M6.3 7.6L11.2 7.6" fill="none" stroke="#141a4a" stroke-width="1.15" stroke-linecap="round"/></svg>
<div class="t" style="left:28.8px;top:88.84px;font-size:12px;letter-spacing:-0.125px;">sgdt_test</div>
<svg class="a" style="left:7px;top:103px" width="16" height="16" viewBox="0 0 16 16"><rect x="0.5" y="0.5" width="15" height="15" fill="#fff" stroke="#3468dc"/><rect x="2" y="4" width="12" height="10" fill="url(#fb)"/><rect x="0" y="0" width="16" height="3" fill="url(#tb)"/><rect x="1" y="1" width="10" height="1" fill="#6fd8fa" opacity="0.6"/><path d="M11.9 4.7C10.4 4.1 9.4 4.7 9 6.1L7.1 12.4C6.7 13.7 5.7 14 4.3 13.6M6.3 7.6L11.2 7.6" fill="none" stroke="#141a4a" stroke-width="1.15" stroke-linecap="round"/></svg>
<div class="t" style="left:28.8px;top:105.84px;font-size:12px;letter-spacing:-0.223px;">str_test</div>
<svg class="a" style="left:7px;top:120px" width="16" height="16" viewBox="0 0 16 16"><rect x="0.5" y="0.5" width="15" height="15" fill="#fff" stroke="#3468dc"/><rect x="2" y="4" width="12" height="10" fill="url(#fb)"/><rect x="0" y="0" width="16" height="3" fill="url(#tb)"/><rect x="1" y="1" width="10" height="1" fill="#6fd8fa" opacity="0.6"/><path d="M11.9 4.7C10.4 4.1 9.4 4.7 9 6.1L7.1 12.4C6.7 13.7 5.7 14 4.3 13.6M6.3 7.6L11.2 7.6" fill="none" stroke="#141a4a" stroke-width="1.15" stroke-linecap="round"/></svg>
<div class="t" style="left:28.8px;top:122.84px;font-size:12px;letter-spacing:-0.446px;">VMXh_0xA_test</div>
<svg class="a" style="left:7px;top:137px" width="16" height="16" viewBox="0 0 16 16"><rect x="0.5" y="0.5" width="15" height="15" fill="#fff" stroke="#3468dc"/><rect x="2" y="4" width="12" height="10" fill="url(#fb)"/><rect x="0" y="0" width="16" height="3" fill="url(#tb)"/><rect x="1" y="1" width="10" height="1" fill="#6fd8fa" opacity="0.6"/><path d="M11.9 4.7C10.4 4.1 9.4 4.7 9 6.1L7.1 12.4C6.7 13.7 5.7 14 4.3 13.6M6.3 7.6L11.2 7.6" fill="none" stroke="#141a4a" stroke-width="1.15" stroke-linecap="round"/></svg>
<div class="t" style="left:28.8px;top:139.84px;font-size:12px;letter-spacing:-0.538px;">VMXh_0x14_test</div>
<svg class="a" style="left:7px;top:154px" width="16" height="16" viewBox="0 0 16 16"><rect x="0.5" y="0.5" width="15" height="15" fill="#fff" stroke="#3468dc"/><rect x="2" y="4" width="12" height="10" fill="url(#fb)"/><rect x="0" y="0" width="16" height="3" fill="url(#tb)"/><rect x="1" y="1" width="10" height="1" fill="#6fd8fa" opacity="0.6"/><path d="M11.9 4.7C10.4 4.1 9.4 4.7 9 6.1L7.1 12.4C6.7 13.7 5.7 14 4.3 13.6M6.3 7.6L11.2 7.6" fill="none" stroke="#141a4a" stroke-width="1.15" stroke-linecap="round"/></svg>
<div class="t" style="left:28.8px;top:156.84px;font-size:12px;letter-spacing:-0.675px;">sub_401470</div>
<svg class="a" style="left:7px;top:171px" width="16" height="16" viewBox="0 0 16 16"><rect x="0.5" y="0.5" width="15" height="15" fill="#fff" stroke="#3468dc"/><rect x="2" y="4" width="12" height="10" fill="url(#fb)"/><rect x="0" y="0" width="16" height="3" fill="url(#tb)"/><rect x="1" y="1" width="10" height="1" fill="#6fd8fa" opacity="0.6"/><path d="M11.9 4.7C10.4 4.1 9.4 4.7 9 6.1L7.1 12.4C6.7 13.7 5.7 14 4.3 13.6M6.3 7.6L11.2 7.6" fill="none" stroke="#141a4a" stroke-width="1.15" stroke-linecap="round"/></svg>
<div class="t" style="left:28.8px;top:173.84px;font-size:12px;letter-spacing:-0.696px;">sub_4014C0</div>
<svg class="a" style="left:7px;top:188px" width="16" height="16" viewBox="0 0 16 16"><rect x="0.5" y="0.5" width="15" height="15" fill="#fff" stroke="#3468dc"/><rect x="2" y="4" width="12" height="10" fill="url(#fb)"/><rect x="0" y="0" width="16" height="3" fill="url(#tb)"/><rect x="1" y="1" width="10" height="1" fill="#6fd8fa" opacity="0.6"/><path d="M11.9 4.7C10.4 4.1 9.4 4.7 9 6.1L7.1 12.4C6.7 13.7 5.7 14 4.3 13.6M6.3 7.6L11.2 7.6" fill="none" stroke="#141a4a" stroke-width="1.15" stroke-linecap="round"/></svg>
<div class="t" style="left:28.8px;top:190.84px;font-size:12px;letter-spacing:-0.696px;">sub_4014D0</div>
<svg class="a" style="left:7px;top:205px" width="16" height="16" viewBox="0 0 16 16"><rect x="0.5" y="0.5" width="15" height="15" fill="#fff" stroke="#3468dc"/><rect x="2" y="4" width="12" height="10" fill="url(#fb)"/><rect x="0" y="0" width="16" height="3" fill="url(#tb)"/><rect x="1" y="1" width="10" height="1" fill="#6fd8fa" opacity="0.6"/><path d="M11.9 4.7C10.4 4.1 9.4 4.7 9 6.1L7.1 12.4C6.7 13.7 5.7 14 4.3 13.6M6.3 7.6L11.2 7.6" fill="none" stroke="#141a4a" stroke-width="1.15" stroke-linecap="round"/></svg>
<div class="t" style="left:28.8px;top:207.84px;font-size:12px;letter-spacing:-0.472px;font-weight:bold;">_main</div>
<div class="a" style="left:4px;top:222px;width:110px;height:17px;background:#e1ffff"></div>
<svg class="a" style="left:7px;top:222px" width="16" height="16" viewBox="0 0 16 16"><rect x="0.5" y="0.5" width="15" height="15" fill="#fff" stroke="#3468dc"/><rect x="2" y="4" width="12" height="10" fill="url(#fb)"/><rect x="0" y="0" width="16" height="3" fill="url(#tb)"/><rect x="1" y="1" width="10" height="1" fill="#6fd8fa" opacity="0.6"/><path d="M11.9 4.7C10.4 4.1 9.4 4.7 9 6.1L7.1 12.4C6.7 13.7 5.7 14 4.3 13.6M6.3 7.6L11.2 7.6" fill="none" stroke="#141a4a" stroke-width="1.15" stroke-linecap="round"/></svg>
<div class="t" style="left:28.8px;top:224.84px;font-size:12px;letter-spacing:-0.466px;">__security_check</div>
<div class="a" style="left:4px;top:239px;width:110px;height:17px;background:#e1ffff"></div>
<svg class="a" style="left:7px;top:239px" width="16" height="16" viewBox="0 0 16 16"><rect x="0.5" y="0.5" width="15" height="15" fill="#fff" stroke="#3468dc"/><rect x="2" y="4" width="12" height="10" fill="url(#fb)"/><rect x="0" y="0" width="16" height="3" fill="url(#tb)"/><rect x="1" y="1" width="10" height="1" fill="#6fd8fa" opacity="0.6"/><path d="M11.9 4.7C10.4 4.1 9.4 4.7 9 6.1L7.1 12.4C6.7 13.7 5.7 14 4.3 13.6M6.3 7.6L11.2 7.6" fill="none" stroke="#141a4a" stroke-width="1.15" stroke-linecap="round"/></svg>
<div class="t" style="left:28.8px;top:241.84px;font-size:12px;letter-spacing:0.093px;font-weight:bold;">_printf</div>
<div class="a" style="left:4px;top:256px;width:110px;height:17px;background:#e1ffff"></div>
<svg class="a" style="left:7px;top:256px" width="16" height="16" viewBox="0 0 16 16"><rect x="0.5" y="0.5" width="15" height="15" fill="#fff" stroke="#3468dc"/><rect x="2" y="4" width="12" height="10" fill="url(#fb)"/><rect x="0" y="0" width="16" height="3" fill="url(#tb)"/><rect x="1" y="1" width="10" height="1" fill="#6fd8fa" opacity="0.6"/><path d="M11.9 4.7C10.4 4.1 9.4 4.7 9 6.1L7.1 12.4C6.7 13.7 5.7 14 4.3 13.6M6.3 7.6L11.2 7.6" fill="none" stroke="#141a4a" stroke-width="1.15" stroke-linecap="round"/></svg>
<div class="t" style="left:28.8px;top:258.84px;font-size:12px;font-weight:bold;letter-spacing:-0.397px;">__get_printf_cou</div>
<div class="a" style="left:4px;top:273px;width:110px;height:17px;background:#e1ffff"></div>
<svg class="a" style="left:7px;top:273px" width="16" height="16" viewBox="0 0 16 16"><rect x="0.5" y="0.5" width="15" height="15" fill="#fff" stroke="#3468dc"/><rect x="2" y="4" width="12" height="10" fill="url(#fb)"/><rect x="0" y="0" width="16" height="3" fill="url(#tb)"/><rect x="1" y="1" width="10" height="1" fill="#6fd8fa" opacity="0.6"/><path d="M11.9 4.7C10.4 4.1 9.4 4.7 9 6.1L7.1 12.4C6.7 13.7 5.7 14 4.3 13.6M6.3 7.6L11.2 7.6" fill="none" stroke="#141a4a" stroke-width="1.15" stroke-linecap="round"/></svg>
<div class="t" style="left:28.8px;top:275.84px;font-size:12px;letter-spacing:-0.509px;">__except_handler</div>
<div class="a" style="left:4px;top:290px;width:110px;height:17px;background:#e1ffff"></div>
<svg class="a" style="left:7px;top:290px" width="16" height="16" viewBox="0 0 16 16"><rect x="0.5" y="0.5" width="15" height="15" fill="#fff" stroke="#3468dc"/><rect x="2" y="4" width="12" height="10" fill="url(#fb)"/><rect x="0" y="0" width="16" height="3" fill="url(#tb)"/><rect x="1" y="1" width="10" height="1" fill="#6fd8fa" opacity="0.6"/><path d="M11.9 4.7C10.4 4.1 9.4 4.7 9 6.1L7.1 12.4C6.7 13.7 5.7 14 4.3 13.6M6.3 7.6L11.2 7.6" fill="none" stroke="#141a4a" stroke-width="1.15" stroke-linecap="round"/></svg>
<div class="t" style="left:28.8px;top:292.84px;font-size:12px;letter-spacing:-0.022px;font-weight:bold;">_memset</div>
<div class="a" style="left:4px;top:307px;width:110px;height:17px;background:#e1ffff"></div>
<svg class="a" style="left:7px;top:307px" width="16" height="16" viewBox="0 0 16 16"><rect x="0.5" y="0.5" width="15" height="15" fill="#fff" stroke="#3468dc"/><rect x="2" y="4" width="12" height="10" fill="url(#fb)"/><rect x="0" y="0" width="16" height="3" fill="url(#tb)"/><rect x="1" y="1" width="10" height="1" fill="#6fd8fa" opacity="0.6"/><path d="M11.9 4.7C10.4 4.1 9.4 4.7 9 6.1L7.1 12.4C6.7 13.7 5.7 14 4.3 13.6M6.3 7.6L11.2 7.6" fill="none" stroke="#141a4a" stroke-width="1.15" stroke-linecap="round"/></svg>
<div class="t" style="left:28.8px;top:309.84px;font-size:12px;letter-spacing:-0.338px;">_fast_error_exit</div>
<div class="a" style="left:4px;top:324px;width:110px;height:17px;background:#e1ffff"></div>
<svg class="a" style="left:7px;top:324px" width="16" height="16" viewBox="0 0 16 16"><rect x="0.5" y="0.5" width="15" height="15" fill="#fff" stroke="#3468dc"/><rect x="2" y="4" width="12" height="10" fill="url(#fb)"/><rect x="0" y="0" width="16" height="3" fill="url(#tb)"/><rect x="1" y="1" width="10" height="1" fill="#6fd8fa" opacity="0.6"/><path d="M11.9 4.7C10.4 4.1 9.4 4.7 9 6.1L7.1 12.4C6.7 13.7 5.7 14 4.3 13.6M6.3 7.6L11.2 7.6" fill="none" stroke="#141a4a" stroke-width="1.15" stroke-linecap="round"/></svg>
<div class="t" style="left:28.8px;top:326.84px;font-size:12px;letter-spacing:-0.339px;">_check_managed</div>
<div class="a" style="left:4px;top:341px;width:110px;height:17px;background:#e1ffff"></div>
<svg class="a" style="left:7px;top:341px" width="16" height="16" viewBox="0 0 16 16"><rect x="0.5" y="0.5" width="15" height="15" fill="#fff" stroke="#3468dc"/><rect x="2" y="4" width="12" height="10" fill="url(#fb)"/><rect x="0" y="0" width="16" height="3" fill="url(#tb)"/><rect x="1" y="1" width="10" height="1" fill="#6fd8fa" opacity="0.6"/><path d="M11.9 4.7C10.4 4.1 9.4 4.7 9 6.1L7.1 12.4C6.7 13.7 5.7 14 4.3 13.6M6.3 7.6L11.2 7.6" fill="none" stroke="#141a4a" stroke-width="1.15" stroke-linecap="round"/></svg>
<div class="t" style="left:28.8px;top:343.84px;font-size:12px;letter-spacing:-0.602px;">___tmainCRTStart</div>
<div class="a" style="left:4px;top:358px;width:110px;height:17px;background:#e1ffff"></div>
<svg class="a" style="left:7px;top:358px" width="16" height="16" viewBox="0 0 16 16"><rect x="0.5" y="0.5" width="15" height="15" fill="#fff" stroke="#3468dc"/><rect x="2" y="4" width="12" height="10" fill="url(#fb)"/><rect x="0" y="0" width="16" height="3" fill="url(#tb)"/><rect x="1" y="1" width="10" height="1" fill="#6fd8fa" opacity="0.6"/><path d="M11.9 4.7C10.4 4.1 9.4 4.7 9 6.1L7.1 12.4C6.7 13.7 5.7 14 4.3 13.6M6.3 7.6L11.2 7.6" fill="none" stroke="#141a4a" stroke-width="1.15" stroke-linecap="round"/></svg>
<div class="t" style="left:28.8px;top:360.84px;font-size:12px;letter-spacing:-0.719px;">$LN31</div>
<div class="a" style="left:4px;top:375px;width:110px;height:17px;background:#e1ffff"></div>
<svg class="a" style="left:7px;top:375px" width="16" height="16" viewBox="0 0 16 16"><rect x="0.5" y="0.5" width="15" height="15" fill="#fff" stroke="#3468dc"/><rect x="2" y="4" width="12" height="10" fill="url(#fb)"/><rect x="0" y="0" width="16" height="3" fill="url(#tb)"/><rect x="1" y="1" width="10" height="1" fill="#6fd8fa" opacity="0.6"/><path d="M11.9 4.7C10.4 4.1 9.4 4.7 9 6.1L7.1 12.4C6.7 13.7 5.7 14 4.3 13.6M6.3 7.6L11.2 7.6" fill="none" stroke="#141a4a" stroke-width="1.15" stroke-linecap="round"/></svg>
<div class="t" style="left:28.8px;top:377.84px;font-size:12px;letter-spacing:-0.357px;">___report_gsfailu</div>
<svg class="a" style="left:7px;top:392px" width="16" height="16" viewBox="0 0 16 16"><rect x="0.5" y="0.5" width="15" height="15" fill="#fff" stroke="#3468dc"/><rect x="2" y="4" width="12" height="10" fill="url(#fb)"/><rect x="0" y="0" width="16" height="3" fill="url(#tb)"/><rect x="1" y="1" width="10" height="1" fill="#6fd8fa" opacity="0.6"/><path d="M11.9 4.7C10.4 4.1 9.4 4.7 9 6.1L7.1 12.4C6.7 13.7 5.7 14 4.3 13.6M6.3 7.6L11.2 7.6" fill="none" stroke="#141a4a" stroke-width="1.15" stroke-linecap="round"/></svg>
<div class="t" style="left:28.8px;top:394.84px;font-size:12px;letter-spacing:-0.663px;">sub_401C43</div>
<div class="a" style="left:4px;top:409px;width:110px;height:17px;background:#e1ffff"></div>
<svg class="a" style="left:7px;top:409px" width="16" height="16" viewBox="0 0 16 16"><rect x="0.5" y="0.5" width="15" height="15" fill="#fff" stroke="#3468dc"/><rect x="2" y="4" width="12" height="10" fill="url(#fb)"/><rect x="0" y="0" width="16" height="3" fill="url(#tb)"/><rect x="1" y="1" width="10" height="1" fill="#6fd8fa" opacity="0.6"/><path d="M11.9 4.7C10.4 4.1 9.4 4.7 9 6.1L7.1 12.4C6.7 13.7 5.7 14 4.3 13.6M6.3 7.6L11.2 7.6" fill="none" stroke="#141a4a" stroke-width="1.15" stroke-linecap="round"/></svg>
<div class="t" style="left:28.8px;top:411.84px;font-size:12px;letter-spacing:-0.290px;">__lock_file</div>
<div class="a" style="left:4px;top:426px;width:110px;height:17px;background:#e1ffff"></div>
<svg class="a" style="left:7px;top:426px" width="16" height="16" viewBox="0 0 16 16"><rect x="0.5" y="0.5" width="15" height="15" fill="#fff" stroke="#3468dc"/><rect x="2" y="4" width="12" height="10" fill="url(#fb)"/><rect x="0" y="0" width="16" height="3" fill="url(#tb)"/><rect x="1" y="1" width="10" height="1" fill="#6fd8fa" opacity="0.6"/><path d="M11.9 4.7C10.4 4.1 9.4 4.7 9 6.1L7.1 12.4C6.7 13.7 5.7 14 4.3 13.6M6.3 7.6L11.2 7.6" fill="none" stroke="#141a4a" stroke-width="1.15" stroke-linecap="round"/></svg>
<div class="t" style="left:28.8px;top:428.84px;font-size:12px;letter-spacing:-0.416px;">__lock_file2</div>
</div>
<div class="a" style="left:119px;top:154px;width:17px;height:459px;background:#f0f0f0;"></div>
<svg class="a" style="left:125px;top:161px" width="7" height="4"><path d="M0 4L3.5 0L7 4Z" fill="#505050"/></svg>
<svg class="a" style="left:125px;top:601px" width="7" height="4"><path d="M0 0L3.5 4L7 0Z" fill="#505050"/></svg>
<div class="a" style="left:120px;top:172px;width:15px;height:45px;background:linear-gradient(to right,#f5f5f5,#e6e6e6 50%,#cfcfcf);border:1px solid #979797;border-radius:2px"></div>
<div class="a" style="left:124px;top:191px;width:7px;height:1px;background:#4a4a4a;"></div>
<div class="a" style="left:124px;top:192px;width:7px;height:1px;background:#fafafa;"></div>
<div class="a" style="left:124px;top:194px;width:7px;height:1px;background:#4a4a4a;"></div>
<div class="a" style="left:124px;top:195px;width:7px;height:1px;background:#fafafa;"></div>
<div class="a" style="left:124px;top:197px;width:7px;height:1px;background:#4a4a4a;"></div>
<div class="a" style="left:124px;top:198px;width:7px;height:1px;background:#fafafa;"></div>
<div class="a" style="left:6px;top:613px;width:130px;height:17px;background:#f0f0f0;"></div>
<svg class="a" style="left:12px;top:617px" width="4" height="8"><path d="M4 0.5L0 4L4 7.5Z" fill="#303030"/></svg>
<svg class="a" style="left:109px;top:617px" width="4" height="8"><path d="M0 0.5L4 4L0 7.5Z" fill="#505050"/></svg>
<div class="a" style="left:24px;top:614px;width:16px;height:14px;background:linear-gradient(to bottom,#f5f5f5,#e6e6e6 50%,#cfcfcf);border:1px solid #979797;border-radius:2px"></div>
<div class="a" style="left:140px;top:128px;width:855px;height:524px;background:#f0f0f0;"></div>
<div class="a" style="left:394px;top:130px;width:601px;height:1px;background:#8c8c94;"></div>
<div class="a" style="left:394px;top:131px;width:601px;height:1px;background:#fcfcfc;"></div>
<div class="a" style="left:394px;top:132px;width:601px;height:19px;background:linear-gradient(to bottom,#f1f1f1 0%,#efefef 40%,#dedede 48%,#d0d0d0 100%);"></div>
<div class="a" style="left:394px;top:151px;width:601px;height:1px;background:#8a8a90;"></div>
<div class="a" style="left:140px;top:128px;width:255px;height:25px;background:#fff;border:1px solid #8f8f96;border-bottom:none;border-top:1px solid #70707a"></div>
<div class="t" style="left:238.0px;top:134.69px;font-size:11px;letter-spacing:-0.015px;">IDA View-A</div>
<div class="t" style="left:491.0px;top:135.69px;font-size:11px;letter-spacing:-0.083px;">Hex View-1</div>
<div class="t" style="left:745.5px;top:135.69px;font-size:11px;letter-spacing:0.129px;">Structures</div>
<div class="a" style="left:645px;top:132px;width:1px;height:19px;background:#8a8a8a;"></div>
<div class="a" style="left:646px;top:132px;width:1px;height:19px;background:#fdfdfd;"></div>
<div class="a" style="left:898px;top:132px;width:1px;height:19px;background:#8a8a8a;"></div>
<div class="a" style="left:899px;top:132px;width:1px;height:19px;background:#fdfdfd;"></div>
<div class="a" style="left:365px;top:134px;width:14px;height:13px;background:linear-gradient(#f0a088,#d8482c);border-radius:3px;border:1px solid #c24a30"></div>
<svg class="a" style="left:368px;top:136px" width="8" height="9"><path d="M1.2 1.7L6.8 7.3M6.8 1.7L1.2 7.3" stroke="#fff" stroke-width="2" fill="none"/></svg>
<div class="a" style="left:618px;top:135px;width:14px;height:13px;background:linear-gradient(#d4d4d4,#b4b4b4);border-radius:3px;border:1px solid #a0a0a0"></div>
<svg class="a" style="left:621px;top:137px" width="8" height="9"><path d="M1.2 1.7L6.8 7.3M6.8 1.7L1.2 7.3" stroke="#fff" stroke-width="2" fill="none"/></svg>
<div class="a" style="left:871px;top:135px;width:14px;height:13px;background:linear-gradient(#d4d4d4,#b4b4b4);border-radius:3px;border:1px solid #a0a0a0"></div>
<svg class="a" style="left:874px;top:137px" width="8" height="9"><path d="M1.2 1.7L6.8 7.3M6.8 1.7L1.2 7.3" stroke="#fff" stroke-width="2" fill="none"/></svg>
<svg class="a" style="left:152px;top:131px" width="16" height="16" viewBox="0 0 16 16"><rect x="0.5" y="0.5" width="13" height="13" fill="#fff" stroke="#2c6ee0"/><rect x="2" y="4" width="10" height="8" fill="#e8fdfd"/><rect x="0" y="0" width="14" height="3" fill="url(#tb)"/><rect x="1" y="1" width="9" height="1" fill="#6fe0fa" opacity="0.8"/><rect x="5.5" y="3.5" width="10" height="12" fill="#fff" stroke="#1c3e94"/><path d="M7.5 5.5h4M9.5 7.5h5M9.5 9.5h5M7.5 11.5h4M9.5 13.5h5" stroke="#5a6472" stroke-width="1"/></svg>
<svg class="a" style="left:405px;top:132px" width="17" height="17" viewBox="0 0 17 17"><rect x="0.5" y="0.5" width="14" height="14" fill="#fff" stroke="#2c6ee0"/><rect x="2" y="4" width="11" height="9" fill="#e8fdfd"/><rect x="0" y="0" width="15" height="3" fill="url(#tb)"/><rect x="1" y="1" width="10" height="1" fill="#6fe0fa" opacity="0.8"/><path d="M7.5 3.8L11.4 6v4.6L7.5 12.8L3.6 10.6V6z" fill="#eef2ff" stroke="#2424f0" stroke-width="1.2"/></svg>
<svg class="a" style="left:658px;top:132px" width="17" height="17" viewBox="0 0 17 17"><rect x="0.5" y="0.5" width="14" height="14" fill="#fff" stroke="#2c6ee0"/><rect x="2" y="4" width="11" height="9" fill="#e8fdfd"/><rect x="0" y="0" width="15" height="3" fill="url(#tb)"/><rect x="1" y="1" width="10" height="1" fill="#6fe0fa" opacity="0.8"/><path d="M6.3 4.6h2.4l2.4 8.2M6.3 4.6L4.2 12.8M5.2 8.2h4.6M8.6 8.4L5 12" fill="none" stroke="#10246e" stroke-width="1.5" stroke-linejoin="round"/></svg>
<svg class="a" style="left:911px;top:132px" width="18" height="17" viewBox="0 0 18 17"><rect x="0.5" y="0.5" width="15" height="14" fill="#fff" stroke="#2c6ee0"/><rect x="2" y="4" width="12" height="9" fill="#e8fdfd"/><rect x="0" y="0" width="16" height="3" fill="url(#tb)"/><rect x="1" y="1" width="11" height="1" fill="#6fe0fa" opacity="0.8"/><path d="M5.5 2.9999999999999996l1.6 1.6-1.6 1.6-1.6-1.6z" fill="#40d8f0" stroke="#0c2c90" stroke-width="1"/><path d="M8.4 4.6h3" stroke="#1048c8" stroke-width="1.3"/><path d="M5.5 7.0l1.6 1.6-1.6 1.6-1.6-1.6z" fill="#40d8f0" stroke="#0c2c90" stroke-width="1"/><path d="M8.4 8.6h3" stroke="#1048c8" stroke-width="1.3"/><path d="M5.5 11.0l1.6 1.6-1.6 1.6-1.6-1.6z" fill="#40d8f0" stroke="#0c2c90" stroke-width="1"/><path d="M8.4 12.6h3" stroke="#1048c8" stroke-width="1.3"/></svg>
<div class="a" style="left:140px;top:152px;width:75px;height:499px;background:#fff;"></div>
<div class="a" style="left:215px;top:152px;width:5px;height:499px;background:#f0f0f0;"></div>
<div class="a" style="left:220px;top:152px;width:775px;height:498px;background:#fff;border-left:1px solid #707a8c;border-top:1px solid #8a8d96"></div>
<div class="a" style="left:221px;top:348px;width:774px;height:15px;background:#ff0000;"></div>
<div class="ln mono" style="top:154px"><span class="k">.text:00401000 </span><span class="b">get_idt_base    proc near</span><span class="g">               ; CODE XREF: sub_4010D0+B<svg width="8" height="10" viewBox="0 0 8 10" style="vertical-align:-3px;margin-right:0.001px"><path d="M3 0h2v6h2l-3 3.5l-3-3.5h2z" fill="#008000"/></svg>p</span></div>
<div class="ln mono" style="top:169px"><span class="k">.text:00401000</span></div>
<div class="ln mono" style="top:184px"><span class="k">.text:00401000 </span><span class="g">var_10</span><span class="n">          = byte ptr </span><span class="g">-10h</span></div>
<div class="ln mono" style="top:199px"><span class="k">.text:00401000 </span><span class="g">var_8</span><span class="n">           = dword ptr </span><span class="g">-8</span></div>
<div class="ln mono" style="top:214px"><span class="b">.text:00401000 </span><span class="g">var_4</span><span class="n">           = dword ptr </span><span class="g">-4</span></div>
<div class="ln mono" style="top:229px"><span class="k">.text:00401000</span></div>
<div class="ln mono" style="top:244px"><span class="k">.text:00401000 </span><span class="n">                push    ebp</span></div>
<div class="ln mono" style="top:259px"><span class="k">.text:00401001 </span><span class="n">                mov     ebp, esp</span></div>
<div class="ln mono" style="top:274px"><span class="k">.text:00401003 </span><span class="n">                sub     esp, </span><span class="g">10h</span></div>
<div class="ln mono" style="top:289px"><span class="k">.text:00401006 </span><span class="n">                mov     eax, </span><span class="b">___security_cookie</span></div>
<div class="ln mono" style="top:304px"><span class="k">.text:0040100B </span><span class="n">                xor     eax, ebp</span></div>
<div class="ln mono" style="top:319px"><span class="k">.text:0040100D </span><span class="n">                mov     [ebp+</span><span class="g">var_8</span><span class="n">], eax</span></div>
<div class="ln mono" style="top:334px"><span class="k">.text:00401010 </span><span class="n">                mov     [ebp+</span><span class="g">var_4</span><span class="n">], </span><span class="g">0</span></div>
<div class="ln mono" style="top:349px"><span class="k">.text:00401017 </span><span class="n">                sidt    fword ptr [ebp+</span><span class="g">var_10</span><span class="n">]</span></div>
<div class="ln mono" style="top:364px"><span class="k">.text:0040101B </span><span class="n">                mov     eax, dword ptr [ebp+</span><span class="g">var_10+2</span><span class="n">]</span></div>
<div class="ln mono" style="top:379px"><span class="k">.text:0040101E </span><span class="n">                mov     [ebp+</span><span class="g">var_4</span><span class="n">], eax</span></div>
<div class="ln mono" style="top:394px"><span class="k">.text:00401021 </span><span class="n">                mov     eax, [ebp+</span><span class="g">var_4</span><span class="n">]</span></div>
<div class="ln mono" style="top:409px"><span class="k">.text:00401024 </span><span class="n">                mov     ecx, [ebp+</span><span class="g">var_8</span><span class="n">]</span></div>
<div class="ln mono" style="top:424px"><span class="k">.text:00401027 </span><span class="n">                xor     ecx, ebp</span></div>
<div class="ln mono" style="top:439px"><span class="k">.text:00401029 </span><span class="n">                call    </span><span class="p">@__security_check_cookie@4</span><span class="y"> ; __security_check_cookie(x)</span></div>
<div class="ln mono" style="top:454px"><span class="k">.text:0040102E </span><span class="n">                mov     esp, ebp</span></div>
<div class="ln mono" style="top:469px"><span class="k">.text:00401030 </span><span class="n">                pop     ebp</span></div>
<div class="ln mono" style="top:484px"><span class="k">.text:00401031 </span><span class="n">                retn</span></div>
<div class="ln mono" style="top:499px"><span class="k">.text:00401031 </span><span class="b">get_idt_base    endp</span></div>
<div class="ln mono" style="top:514px"><span class="k">.text:00401031</span></div>
<div class="ln mono" style="top:529px"><span class="k">.text:00401031 </span><span class="y">;</span></div>
<div class="ln mono" style="top:544px"><span class="y">.text:00401032 </span><span class="n">                align </span><span class="g">10h</span></div>
<div class="ln mono" style="top:559px"><span class="k">.text:00401040</span></div>
<div class="ln mono" style="top:574px"><span class="k">.text:00401040 </span><span class="y">;                 S U B R O U T I N E</span></div>
<div class="ln mono" style="top:589px"><span class="k">.text:00401040</span></div>
<div class="ln mono" style="top:604px"><span class="k">.text:00401040 </span><span class="y">; Attributes: bp-based frame</span></div>
<div class="a" style="left:358px;top:535px;width:598px;height:1px;background:repeating-linear-gradient(to right,#808080 0,#808080 6px,transparent 6px,transparent 8px);"></div>
<div class="a" style="left:358px;top:579px;width:118px;height:1px;background:repeating-linear-gradient(to right,#808080 0,#808080 6px,transparent 6px,transparent 8px);"></div>
<div class="a" style="left:646px;top:579px;width:310px;height:1px;background:repeating-linear-gradient(to right,#808080 0,#808080 6px,transparent 6px,transparent 8px);"></div>
<div class="a" style="left:358px;top:581px;width:118px;height:1px;background:repeating-linear-gradient(to right,#808080 0,#808080 6px,transparent 6px,transparent 8px);"></div>
<div class="a" style="left:646px;top:581px;width:310px;height:1px;background:repeating-linear-gradient(to right,#808080 0,#808080 6px,transparent 6px,transparent 8px);"></div>
<div class="a" style="left:205px;top:243px;width:6px;height:6px;background:#5ac8fa;border-radius:50%"></div>
<div class="a" style="left:205px;top:258px;width:6px;height:6px;background:#5ac8fa;border-radius:50%"></div>
<div class="a" style="left:205px;top:273px;width:6px;height:6px;background:#5ac8fa;border-radius:50%"></div>
<div class="a" style="left:205px;top:288px;width:6px;height:6px;background:#5ac8fa;border-radius:50%"></div>
<div class="a" style="left:205px;top:303px;width:6px;height:6px;background:#5ac8fa;border-radius:50%"></div>
<div class="a" style="left:205px;top:318px;width:6px;height:6px;background:#5ac8fa;border-radius:50%"></div>
<div class="a" style="left:205px;top:333px;width:6px;height:6px;background:#5ac8fa;border-radius:50%"></div>
<div class="a" style="left:205px;top:348px;width:6px;height:6px;background:#5ac8fa;border-radius:50%"></div>
<div class="a" style="left:205px;top:363px;width:6px;height:6px;background:#5ac8fa;border-radius:50%"></div>
<div class="a" style="left:205px;top:378px;width:6px;height:6px;background:#5ac8fa;border-radius:50%"></div>
<div class="a" style="left:205px;top:393px;width:6px;height:6px;background:#5ac8fa;border-radius:50%"></div>
<div class="a" style="left:205px;top:408px;width:6px;height:6px;background:#5ac8fa;border-radius:50%"></div>
<div class="a" style="left:205px;top:423px;width:6px;height:6px;background:#5ac8fa;border-radius:50%"></div>
<div class="a" style="left:205px;top:438px;width:6px;height:6px;background:#5ac8fa;border-radius:50%"></div>
<div class="a" style="left:205px;top:453px;width:6px;height:6px;background:#5ac8fa;border-radius:50%"></div>
<div class="a" style="left:205px;top:468px;width:6px;height:6px;background:#5ac8fa;border-radius:50%"></div>
<div class="a" style="left:205px;top:483px;width:6px;height:6px;background:#5ac8fa;border-radius:50%"></div>
<div class="a" style="left:205px;top:543px;width:6px;height:6px;background:#5ac8fa;border-radius:50%"></div>
<div class="a" style="left:221px;top:630px;width:774px;height:20px;background:#f0f0f0;"></div>
<div class="t" style="left:222.2px;top:636.05px;font-size:11.67px;font-family:'Liberation Mono';">00001000 00401000: get_idt_base</div>
<div class="a" style="left:279px;top:631px;width:1px;height:17px;background:#c8c8c8;"></div>
<div class="a" style="left:438px;top:631px;width:1px;height:17px;background:#c8c8c8;"></div>
<div class="a" style="left:220px;top:650px;width:775px;height:1px;background:#5e6472;"></div>
<div class="a" style="left:140px;top:651px;width:855px;height:4px;background:#f0f0f0;"></div>
<div class="a" style="left:5px;top:655px;width:990px;height:22px;background:#f5f5f5;border:1px solid #b0b0b0;border-right:none"></div>
<svg class="a" style="left:11px;top:658px" width="14" height="16" viewBox="0 0 14 16"><rect x="0.5" y="0.5" width="13" height="15" fill="#fff" stroke="#8a98b0"/><rect x="0" y="0" width="14" height="3" fill="url(#tb)"/><rect x="1" y="1" width="9" height="1" fill="#6fe0fa" opacity="0.8"/><path d="M3 6.5h8M3 8.5h8M3 10.5h8M3 12.5h8" stroke="#5c6880" stroke-width="1"/></svg>
<div class="t" style="left:30.3px;top:660.69px;font-size:11px;letter-spacing:0.045px;">Output window</div>
<div class="a" style="left:5px;top:679px;width:990px;height:174px;background:#fff;border-top:1px solid #828790;border-left:1px solid #e6ecf2"></div>
<div class="a" style="left:5px;top:851px;width:990px;height:2px;background:#e6eaee;"></div>
<div class="a" style="left:-1px;top:712px;width:368.4px;height:138.2px;background:#ffe3e3;border:2px solid #ff0808;border-left-width:2.5px"></div>
<div class="a" style="left:2px;top:714px;width:1px;height:134px;background:#f2dcdc;"></div>
<div class="a" style="left:3px;top:714px;width:1px;height:134px;background:#b4a0a0;"></div>
<div class="a" style="left:4px;top:714px;width:1px;height:134px;background:#f6e2e2;"></div>
<div class="mono a" style="left:10.5px;top:683px">The initial autoanalysis has been finished.</div>
<div class="mono a" style="left:10.5px;top:698px">code flow</div>
<div class="mono a" style="left:10.5px;top:713px">Number of potential Anti-VM instructions: 8</div>
<div class="mono a" style="left:10.5px;top:728px">Anti-VM: 00401017</div>
<div class="mono a" style="left:10.5px;top:743px">Anti-VM: 00401068</div>
<div class="mono a" style="left:10.5px;top:758px">Anti-VM: 004010a7</div>
<div class="mono a" style="left:10.5px;top:773px">Anti-VM: 00401224</div>
<div class="mono a" style="left:10.5px;top:788px">Anti-VM: 004012dc</div>
<div class="mono a" style="left:10.5px;top:803px">Anti-VM: 00401403</div>
<div class="mono a" style="left:10.5px;top:818px">Anti-VM: 00405927</div>
<div class="mono a" style="left:10.5px;top:833px">Anti-VM: 0040593a</div>
<div class="a" style="left:101px;top:680px;width:6px;height:1px;background:#000;"></div>
<div class="a" style="left:322px;top:680px;width:2px;height:1px;background:#000;"></div>
<div class="a" style="left:346px;top:680px;width:2px;height:1px;background:#000;"></div>
<div class="a" style="left:361px;top:680px;width:6px;height:1px;background:#000;"></div>
<svg class="a" style="left:0;top:0" width="995" height="853"><g stroke="#ff0000" stroke-width="1.8" fill="none"><path d="M757.8 693.5L853 369"/><path d="M465.2 805.3L374 827.2"/></g><path d="M854.5 363.8L848 371.8L852.2 370.4L855.8 373.8Z" fill="#ff0000" stroke="#ff0000" stroke-width="0.6" stroke-linejoin="round"/><path d="M369.8 828.2L378 823L377 826.6L379.6 829.8Z" fill="#ff0000" stroke="#ff0000" stroke-width="0.6" stroke-linejoin="round"/></svg>
<div class="t" style="left:610.8px;top:702.00px;font-size:13px;letter-spacing:0.847px;color:#f41010;">Instructions are highlighted in red</div>
<div class="t" style="left:482.5px;top:784.00px;font-size:13px;letter-spacing:0.717px;color:#f41010;">Addresses of Anti-VM instructions</div>
<div class="t" style="left:482.5px;top:799.00px;font-size:13px;letter-spacing:0.939px;color:#f41010;">detected by the script</div>
</body></html>
